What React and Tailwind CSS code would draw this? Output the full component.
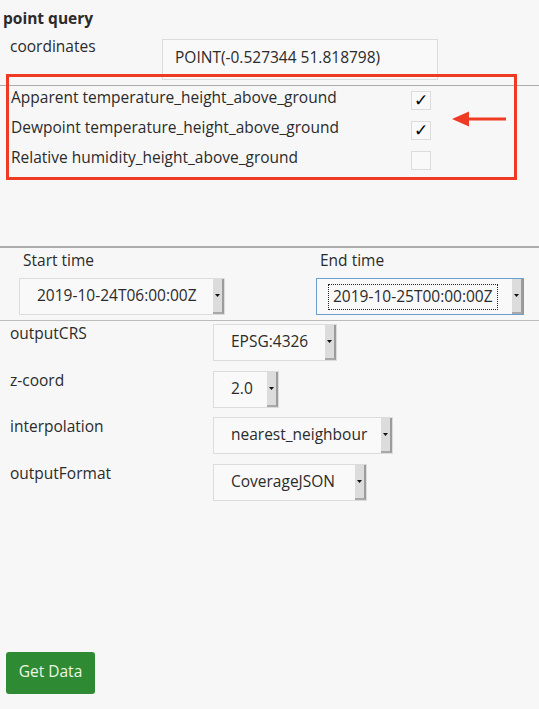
import React from "react";

function Arrow() {
  return (
    <div className="flex w-[11px] self-stretch items-center justify-center bg-[#dcdcdc] border-r-2 border-b-2 border-r-[#9c9c9c] border-b-[#a8a8a8]">
      <svg width="5" height="3" viewBox="0 0 5 3">
        <path d="M0 0 L5 0 L2.5 3 Z" fill="#111" />
      </svg>
    </div>
  );
}

function Select({ value, w, focused }) {
  return (
    <div
      className={
        "flex h-[37px] items-stretch bg-[#f9f9f9] border " +
        (focused ? "border-[#6a9fd0]" : "border-[#dcdcdc]")
      }
      style={{ width: w }}
    >
      <div className="flex flex-1 items-center pl-[17px] pb-[3px]">
        {focused ? (
          <span className="border border-dotted border-[#222] px-[4px] -ml-[6px] mt-[3px] leading-[22px] pb-[2px]">{value}</span>
        ) : (
          <span className="leading-[22px]">{value}</span>
        )}
      </div>
      <Arrow />
    </div>
  );
}

function CheckRow({ label, checked }) {
  return (
    <div className="flex h-[30px] items-center">
      <div className="w-[411px] pl-[11px] pb-[4px]">{label}</div>
      <div className="flex h-[19px] w-[20px] items-center justify-center border border-[#dcdcdc] bg-[#f9f9f9] text-[17px] leading-none text-black font-['DejaVu_Sans',sans-serif]">
        {checked ? "✓" : ""}
      </div>
    </div>
  );
}

function ParamRow({ label, value, w }) {
  return (
    <div className="flex h-[37px]">
      <div className="w-[213px] pl-[10px] leading-[18px]">{label}</div>
      <Select value={value} w={w} />
    </div>
  );
}

export default function App() {
  return (
    <div className="relative w-[539px] h-[709px] overflow-hidden bg-[#f7f7f7] text-[15.5px] text-[#2b2b2b] font-['Open_Sans',sans-serif]">
      <div className="pt-[8px] pl-[3px] font-bold leading-[20px]">point query</div>

      <div className="mt-[11px] flex">
        <div className="w-[162px] pl-[10px] leading-[14px]">coordinates</div>
        <div className="flex h-[41px] w-[276px] items-center border border-[#dcdcdc] bg-[#f9f9f9] pl-[12px] pb-[3px]">
          POINT(-0.527344 51.818798)
        </div>
      </div>

      <div className="mt-[5px] h-px bg-[#acacac]" />

      <div className="-mt-[1px]">
        <CheckRow label="Apparent temperature_height_above_ground" checked />
        <CheckRow label="Dewpoint temperature_height_above_ground" checked />
        <CheckRow label="Relative humidity_height_above_ground" />
      </div>

      <div className="mt-[71px] h-[2px] bg-[#acacac]" />

      <div className="grid grid-cols-[316px_1fr]">
        <div className="pl-[19px]">
          <div className="mt-[2px] ml-[4px] leading-[20px]">Start time</div>
          <div className="mt-[8px]">
            <Select value="2019-10-24T06:00:00Z" w={206} />
          </div>
        </div>
        <div>
          <div className="mt-[2px] ml-[4px] leading-[20px]">End time</div>
          <div className="mt-[8px]">
            <Select value="2019-10-25T00:00:00Z" w={208} focused />
          </div>
        </div>
      </div>

      <div className="mt-[5px] h-px bg-[#bcbcbc]" />

      <div className="mt-[3px] flex flex-col gap-[9.5px]">
        <ParamRow label="outputCRS" value="EPSG:4326" w={124} />
        <ParamRow label="z-coord" value="2.0" w={66} />
        <ParamRow label="interpolation" value="nearest_neighbour" w={180} />
        <ParamRow label="outputFormat" value="CoverageJSON" w={154} />
      </div>

      <div className="mt-[151px] ml-[6px]">
        <button className="flex h-[42px] w-[89px] items-center justify-center rounded-[3px] bg-[#2f8a34] pb-[2px] text-[#eaf7e4]">
          Get Data
        </button>
      </div>

      <div className="absolute left-[6px] top-[74px] h-[106px] w-[511px] border-[3px] border-[#ef3b24]" />
      <svg className="absolute left-[450px] top-[110px]" width="58" height="18" viewBox="0 0 58 18">
        <path d="M2 9 L19 1.5 L19 7.5 L56 7.5 L56 10.5 L19 10.5 L19 16.5 Z" fill="#ef3b24" />
      </svg>
    </div>
  );
}
